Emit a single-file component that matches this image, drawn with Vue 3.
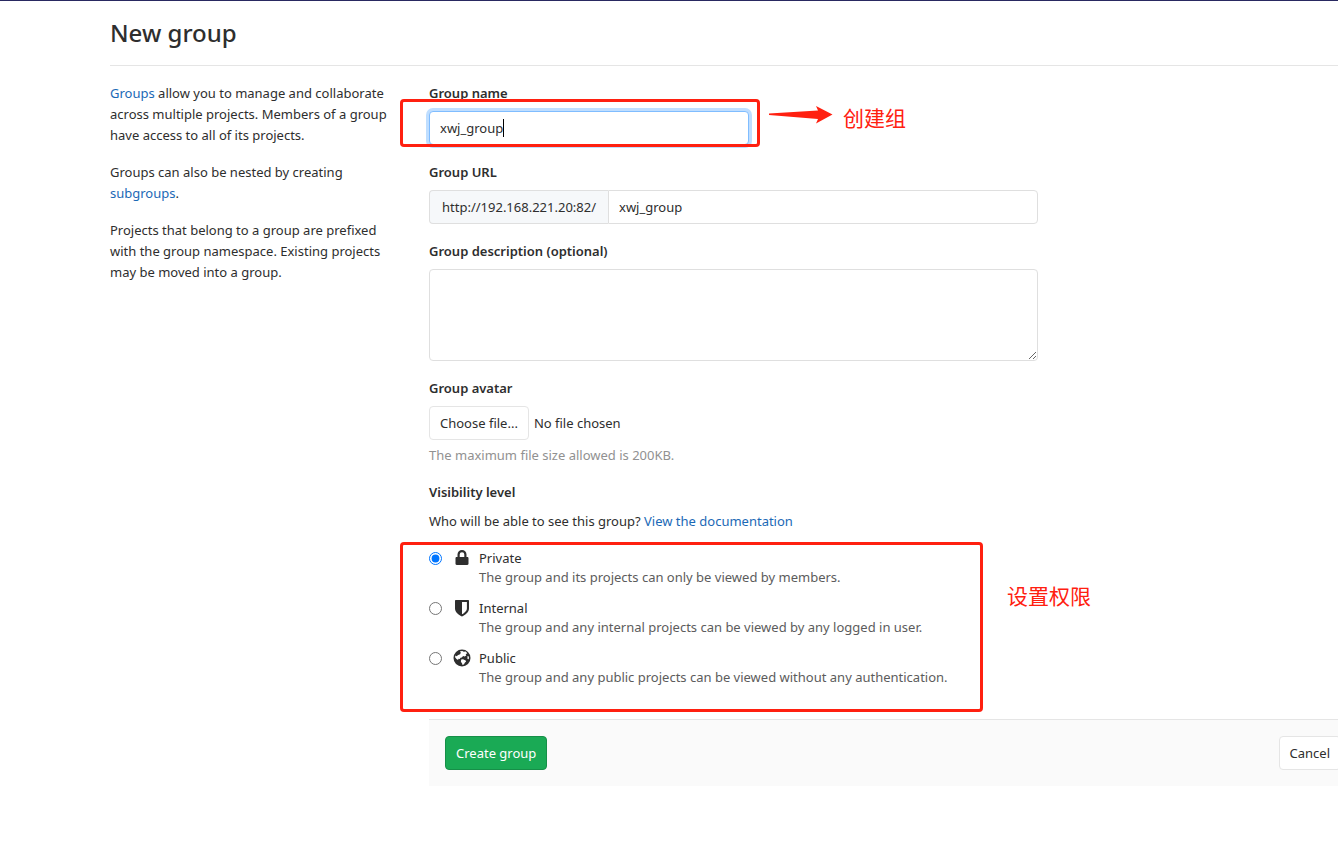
<script setup>
import { ref } from 'vue'

const name = ref('xwj_group')
const description = ref('')
const visibility = ref('private')

const levels = [
  { id: 'private', title: 'Private', text: 'The group and its projects can only be viewed by members.' },
  { id: 'internal', title: 'Internal', text: 'The group and any internal projects can be viewed by any logged in user.' },
  { id: 'public', title: 'Public', text: 'The group and any public projects can be viewed without any authentication.' }
]
</script>

<template>
  <div class="page">
    <div class="navbar-edge"></div>
    <main class="content">
      <h1>New group</h1>
      <div class="columns">
        <aside>
          <p><a href="#groups">Groups</a> allow you to manage and collaborate across multiple projects. Members of a group have access to all of its projects.</p>
          <p>Groups can also be nested by creating <a href="#subgroups">subgroups</a>.</p>
          <p>Projects that belong to a group are prefixed with the group namespace. Existing projects may be moved into a group.</p>
        </aside>

        <form @submit.prevent>
          <div class="field">
            <label class="label" for="group-name">Group name</label>
            <div class="name-row">
              <input id="group-name" v-model="name" class="control focused" type="text" />
              <span class="caret"></span>
              <div class="mark mark-name"></div>
              <div class="note note-name">
                <svg width="64" height="18" viewBox="0 0 64 18" aria-hidden="true">
                  <path d="M0 7.500 L49 4.500 L47 0 L63.500 8.500 L47 17.500 L49 13 L0 9 Z" fill="#ff2010" />
                </svg>
                <span>创建组</span>
              </div>
            </div>
          </div>

          <div class="field">
            <label class="label" for="group-path">Group URL</label>
            <div class="url-row">
              <span class="prefix">http://192.168.221.20:82/</span>
              <input id="group-path" v-model="name" class="control" type="text" />
            </div>
          </div>

          <div class="field">
            <label class="label" for="group-description">Group description (optional)</label>
            <textarea id="group-description" v-model="description" class="control"></textarea>
          </div>

          <div class="field">
            <label class="label" for="group-avatar">Group avatar</label>
            <div class="file-row">
              <button id="group-avatar" class="btn" type="button">Choose file...</button>
              <span>No file chosen</span>
            </div>
            <div class="help">The maximum file size allowed is 200KB.</div>
          </div>

          <div class="visibility">
            <div id="visibility-label" class="label">Visibility level</div>
            <div class="who">Who will be able to see this group? <a href="#documentation">View the documentation</a></div>
            <div class="levels" role="radiogroup" aria-labelledby="visibility-label">
              <div v-for="level in levels" :key="level.id" class="level">
                <input :id="level.id" v-model="visibility" type="radio" name="visibility" :value="level.id" />
                <label :for="level.id">
                  <svg v-if="level.id === 'private'" class="icon" viewBox="0 0 18 18" aria-hidden="true">
                    <path d="M4.500 8V5.500a4.500 4.500 0 0 1 9 0V8h.8c.7 0 1.200.5 1.200 1.200v5.600c0 .7-.5 1.200-1.200 1.200H3.700c-.7 0-1.200-.5-1.200-1.200V9.200C2.500 8.500 3 8 3.700 8zM6.700 8h4.600V5.500a2.300 2.300 0 0 0-4.600 0z" fill="currentColor" fill-rule="evenodd" />
                  </svg>
                  <svg v-else-if="level.id === 'internal'" class="icon" viewBox="0 0 18 18" aria-hidden="true">
                    <path d="M2.700 1h12.600c.4 0 .7.300.7.700V9.500c0 4-4.300 6.900-7 8-2.700-1.100-7-4-7-8V1.700c0-.4.300-.7.700-.7zM9 3v12.300c1.700-.9 4.900-3.100 4.900-5.800V3z" fill="currentColor" fill-rule="evenodd" />
                  </svg>
                  <svg v-else class="icon" viewBox="0 0 18 18" aria-hidden="true">
                    <circle cx="9" cy="9" r="8.500" fill="currentColor" />
                    <path d="M7 2.200l2.400-.3 1.300.9 2-.2 1.600 1.700-1.600.9.6 1.200-1.700 1-1.500-.4-1.300 1.500-1.300.3-.8 1.200-1.300-.2-.3 1.100-1.600-.8-1.300-1.600 0-1.900 1.400.6 1.600-1.100 1.900-.8.7-1.500z" fill="#fff" />
                    <path d="M8.200 10.500l1.800-.2 2.700 1.300.4 1-1.300 1.200-.8 1.500-1.500.8-.4-1.500-1.200-1.900z" fill="#fff" />
                    <path d="M14.500 7l1.100.3.4 1.700-.6 1.500-.9-1.300z" fill="#fff" />
                  </svg>
                  <span class="level-title">{{ level.title }}</span>
                  <span class="level-text">{{ level.text }}</span>
                </label>
              </div>
              <div class="mark mark-levels"></div>
              <div class="note note-levels">设置权限</div>
            </div>
          </div>

          <div class="actions">
            <button class="btn create" type="submit">Create group</button>
            <button class="btn" type="button">Cancel</button>
          </div>
        </form>
      </div>
    </main>
  </div>
</template>

<style>
body {
  margin: 0;
  background: #fff;
}
</style>

<style scoped>
.page {
  overflow: hidden;
  min-height: 100vh;
  color: #2e2e2e;
  font: 13px/21px "Noto Sans", "Noto Sans CJK SC", sans-serif;
}
.page *, .page {
  box-sizing: border-box;
}
.navbar-edge {
  height: 1px;
  background: #292961;
}
.content {
  margin-left: 110px;
  margin-right: -19px;
}
h1 {
  margin: 0 0 17px;
  padding: 16px 0;
  border-bottom: 1px solid #e5e5e5;
  font-size: 24px;
  line-height: 32px;
  font-weight: 500;
}
a {
  color: #1b69b6;
  text-decoration: none;
}
.columns {
  display: flex;
  gap: 32px;
}
aside {
  flex: 0 0 287px;
}
p {
  margin: 0 0 16px;
}
form {
  flex: 1;
  min-width: 0;
}
.field {
  max-width: 609px;
  margin-bottom: 17px;
}
.label {
  display: block;
  margin-bottom: 7px;
  font-weight: 600;
}
.control {
  display: block;
  width: 100%;
  height: 34px;
  margin: 0;
  padding: 6px 10px;
  border: 1px solid #dfdfdf;
  border-radius: 4px;
  background: #fff;
  color: inherit;
  font: inherit;
  outline: none;
}
.control.focused {
  border-color: #80bdff;
  box-shadow: 0 0 0 3px #bfdeff;
}
textarea.control {
  height: 92px;
}
.name-row {
  position: relative;
  width: 320px;
}
.caret {
  position: absolute;
  top: 8px;
  left: 74px;
  width: 1px;
  height: 18px;
  background: #000;
}
.mark {
  position: absolute;
  border: 3px solid #ff2010;
  border-radius: 4px;
  pointer-events: none;
}
.mark-name {
  inset: -12px -11px -2px -29px;
}
.note {
  position: absolute;
  color: #ff2010;
  font: 21px/28px "Noto Sans CJK SC", sans-serif;
  white-space: nowrap;
}
.note-name {
  top: -8px;
  left: 340px;
  display: flex;
  align-items: center;
  gap: 10px;
}
.note-name svg {
  align-self: flex-start;
  margin-top: 3px;
}
.url-row {
  display: flex;
}
.prefix {
  flex: none;
  padding: 6px 12px;
  height: 34px;
  border: 1px solid #dfdfdf;
  border-right: 0;
  border-radius: 4px 0 0 4px;
  background: #f6f8fa;
}
.url-row .control {
  flex: 1;
  min-width: 0;
  border-radius: 0 4px 4px 0;
}
.file-row {
  display: flex;
  align-items: center;
  gap: 5px;
}
.btn {
  height: 34px;
  padding: 0 10px;
  border: 1px solid #e5e5e5;
  border-radius: 4px;
  background: #fff;
  color: inherit;
  font: inherit;
}
.help {
  margin-top: 5px;
  line-height: 20px;
  color: #919191;
}
.visibility .label {
  margin-bottom: 8px;
}
.who {
  margin-bottom: 17px;
}
.levels {
  position: relative;
  padding-bottom: 20px;
}
.level {
  display: flex;
  align-items: flex-start;
  height: 50px;
}
.level input {
  width: 13px;
  height: 13px;
  margin: 3px 11px 0 0;
}
.level label {
  display: grid;
  grid-template-columns: 18px auto;
  column-gap: 8px;
  line-height: 19px;
}
.icon {
  width: 18px;
  height: 18px;
}
.level-text {
  grid-column: 2;
  color: #5c5c5c;
}
.mark-levels {
  top: -7px;
  left: -29px;
  width: 583px;
  height: 170px;
}
.note-levels {
  top: 32px;
  left: 578px;
}
.actions {
  display: flex;
  justify-content: space-between;
  padding: 16px;
  border-top: 1px solid #e5e5e5;
  background: #fafafa;
}
.create {
  border-color: #168f48;
  background: #1aaa55;
  color: #fff;
}
</style>
